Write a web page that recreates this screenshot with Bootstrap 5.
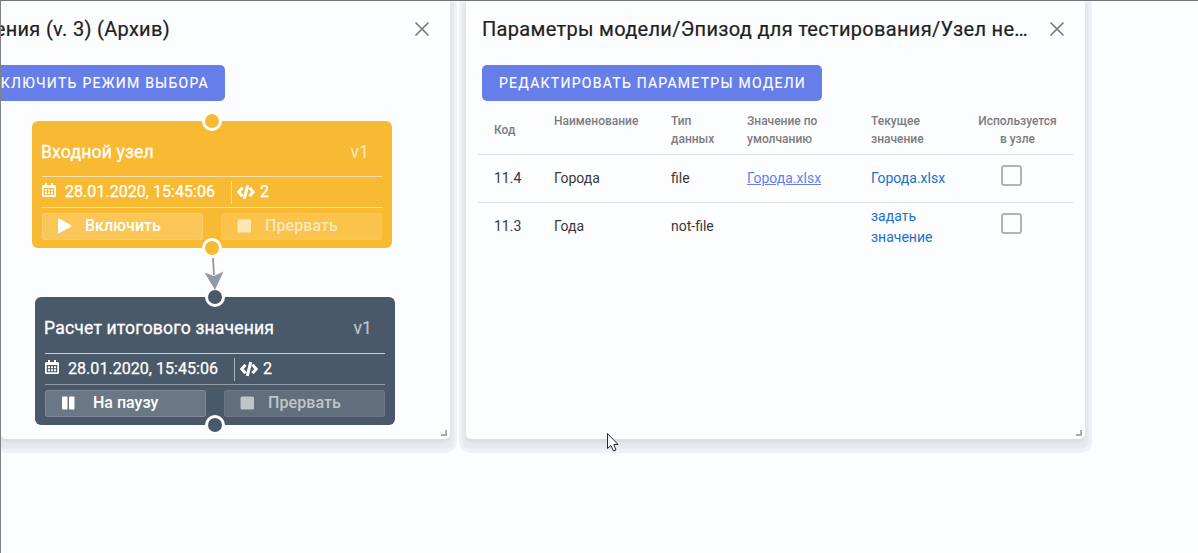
<!DOCTYPE html>
<html lang="ru">
<head>
<meta charset="utf-8">
<title>Параметры модели</title>
<link href="https://cdn.jsdelivr.net/npm/bootstrap@5.3.0/dist/css/bootstrap.min.css" rel="stylesheet">
<style>
html,body{height:100%}
body{font-family:Roboto,sans-serif;background:#fcfdff;color:#212121;border-top:1px solid #747377;border-left:1px solid #828187;overflow:hidden}
.pane{background:#fcfdff;height:438px;border-radius:0 0 5px 5px;box-shadow:0 3px 3px #d8dce4,0 6px 1px 4px #e7e9ee,0 7px 1px 7px #eef2f8}
.pane-left{width:449px}
.pane-right{width:619px}
.pane-head{height:64px;padding:0 20px 8px 16px}
.pane-title{font-size:20px;font-weight:400;line-height:28px;letter-spacing:.31px;white-space:nowrap;-webkit-text-stroke:.2px #212121}
.btn-mode{height:36px;background:#667eea;color:#fff;border:0;border-radius:5px;padding:0 16px 0 17px;font-size:14px;line-height:36px;letter-spacing:1.26px;white-space:nowrap;-webkit-text-stroke:.15px #fff}
.btn-mode:hover{background:#667eea;color:#fff}
.canvas{height:338px}
.node{position:absolute;width:360px;height:127px;border-radius:6px;padding:0 10px;color:#fff;font-size:16px;font-weight:500}
.node-input{left:31px;top:20px;background:#f8ba32;--fill:#f8ba32;--rule:rgba(255,255,255,.6);--rule2:rgba(255,255,255,.6)}
.node-calc{left:34px;top:196px;height:128px;padding-top:1px;background:#4a5969;--fill:#4a5969;--rule:rgba(255,255,255,.7);--rule2:rgba(255,255,255,.4)}
.node-name{height:56px;border-bottom:1px solid var(--rule);padding:7px 13px 0 0;font-size:17.6px;font-weight:400;-webkit-text-stroke:.3px #fff}
.node-calc .node-name{padding-top:5px}
.node-name span:first-child{margin-left:-1px;letter-spacing:.16px}
.node-name span:last-child{opacity:.65;-webkit-text-stroke:.1px #fff}
.node-meta{height:31px;border-bottom:1px solid var(--rule2);font-weight:400;font-size:16.1px;-webkit-text-stroke:.25px #fff}
.node-meta .date{width:151px;margin-left:9px;white-space:nowrap}
.node-meta i{width:1px;height:23px;background:rgba(255,255,255,.55);margin:0 4px 0 15px}
.node-meta svg:first-child{margin-bottom:2px}
.node-btn{width:161px;height:27px;background:rgba(255,255,255,.18);border:1px solid rgba(255,255,255,.14);border-radius:3px;padding-left:14px;margin-top:5px}
.node-btn svg{margin-bottom:1px}
.node-btn span{margin-bottom:1px}
.node-btn.off{background:rgba(255,255,255,.13);border-color:rgba(255,255,255,.07)}
.node-btn.off>*{opacity:.6}
.label-on{margin-left:12px}
.label-off{margin-left:13px;letter-spacing:.08px}
.label-pause{margin-left:17px}
.port{position:absolute;left:170px;width:20px;height:20px;border-radius:50%;border:3px solid #fff;background:var(--fill)}
.port.in{top:-10px}.port.out{bottom:-10px}
.link-arrow{position:absolute;left:196px;top:154px}
.grip{position:absolute;right:3px;bottom:3px;width:6px;height:6px;border:solid #adadb1;border-width:0 2px 2px 0}
.params{width:595px;margin:2px 0 0 12px;table-layout:fixed;font-size:14px;line-height:21px;color:#38383a;border-collapse:collapse}
.params th{font-size:12px;line-height:18px;font-weight:500;color:#7b7c7f;height:51px;padding:9px 16px 0;vertical-align:top}
.params th:first-child{padding:4px 16px 0}
.params td{height:48px;padding:0 16px;vertical-align:middle}
.params tr+tr td,.params tbody tr:first-child td{border-top:1px solid #e1e2e5}
.params a{color:#2170cc;text-decoration:none}
.params a.file{color:#667eea;text-decoration:underline}
.params td.two-line{padding-top:2px}
.tick{display:block;width:21px;height:21px;border:2px solid #b3b3b5;border-radius:3px;margin:-5px 0 0 23px}
.cursor{position:absolute;left:605px;top:431px}
</style>
</head>
<body>
<main class="d-flex gap-3 position-relative">
  <section class="pane pane-left position-relative flex-shrink-0">
    <header class="pane-head d-flex align-items-center justify-content-between ps-0">
      <div class="d-flex justify-content-end overflow-hidden" style="width:169px"><span class="pane-title">ения (v. 3) (Архив)</span></div>
      <svg width="16" height="16" viewBox="0 0 16 16" stroke="#77777b" stroke-width="1.6"><path d="M1.5 1.5l13 13M14.5 1.5l-13 13"/></svg>
    </header>
    <div class="d-flex justify-content-end overflow-hidden" style="width:224px"><button class="btn btn-mode">КЛЮЧИТЬ РЕЖИМ ВЫБОРА</button></div>
    <div class="canvas position-relative">
      <article class="node node-input">
        <div class="node-name d-flex align-items-center justify-content-between"><span>Входной узел</span><span>v1</span></div>
        <div class="node-meta d-flex align-items-center">
          <svg width="14" height="16" viewBox="0 0 14 16" fill="#fff"><use href="#cal"/></svg><span class="date">28.01.2020, 15:45:06</span><i></i>
          <svg width="20" height="16" viewBox="0 0 20 16"><use href="#code"/></svg><span class="ms-1">2</span>
        </div>
        <div class="d-flex justify-content-between">
          <div class="node-btn d-flex align-items-center"><svg width="16" height="16" fill="#fff"><path d="M1 1.500Q1 0 2.400.8L14 7.200Q15 8 14 8.800L2.400 15Q1 15.500 1 14z"/></svg><span class="label-on">Включить</span></div>
          <div class="node-btn off d-flex align-items-center"><svg width="16" height="16" fill="#fff"><rect x="1.500" y="1.500" width="13.500" height="13" rx="1.5"/></svg><span class="label-off">Прервать</span></div>
        </div>
        <span class="port in"></span><span class="port out"></span>
      </article>
      <article class="node node-calc">
        <div class="node-name d-flex align-items-center justify-content-between"><span>Расчет итогового значения</span><span>v1</span></div>
        <div class="node-meta d-flex align-items-center">
          <svg width="14" height="16" viewBox="0 0 14 16" fill="#fff"><use href="#cal"/></svg><span class="date">28.01.2020, 15:45:06</span><i></i>
          <svg width="20" height="16" viewBox="0 0 20 16"><use href="#code"/></svg><span class="ms-1">2</span>
        </div>
        <div class="d-flex justify-content-between">
          <div class="node-btn d-flex align-items-center"><svg width="16" height="16" fill="#fff"><rect x="2" y="1.500" width="5.500" height="13" rx="1"/><rect x="9" y="1.500" width="5.500" height="13" rx="1"/></svg><span class="label-pause">На паузу</span></div>
          <div class="node-btn off d-flex align-items-center"><svg width="16" height="16" fill="#fff"><rect x="1.500" y="1.500" width="13.500" height="13" rx="1.5"/></svg><span class="label-off">Прервать</span></div>
        </div>
        <span class="port in"></span><span class="port out"></span>
      </article>
      <svg class="link-arrow" width="36" height="36"><path d="M16 3L17 20" stroke="#9299a6" stroke-width="1.800"/><path d="M7.500 17.500L17 21L26.500 16.500L18 35z" fill="#9299a6"/></svg>
    </div>
    <span class="grip"></span>
  </section>

  <section class="pane pane-right position-relative flex-shrink-0">
    <header class="pane-head d-flex align-items-center justify-content-between">
      <span class="pane-title">Параметры модели/Эпизод для тестирования/Узел не…</span>
      <svg width="16" height="16" viewBox="0 0 16 16" stroke="#77777b" stroke-width="1.6"><path d="M1.5 1.5l13 13M14.5 1.5l-13 13"/></svg>
    </header>
    <button class="btn btn-mode ms-3 d-block">РЕДАКТИРОВАТЬ ПАРАМЕТРЫ МОДЕЛИ</button>
    <table class="params">
      <colgroup><col style="width:60px"><col style="width:117px"><col style="width:76px"><col style="width:124px"><col style="width:107px"><col style="width:111px"></colgroup>
      <thead><tr><th class="align-middle">Код</th><th>Наименование</th><th>Тип данных</th><th>Значение по умолчанию</th><th>Текущее значение</th><th class="text-center">Используется в&nbsp;узле</th></tr></thead>
      <tbody>
        <tr><td>11.4</td><td>Города</td><td>file</td><td><a class="file" href="#">Города.xlsx</a></td><td><a href="#">Города.xlsx</a></td><td><span class="tick"></span></td></tr>
        <tr><td>11.3</td><td>Года</td><td>not-file</td><td></td><td class="two-line"><a href="#">задать значение</a></td><td><span class="tick"></span></td></tr>
      </tbody>
    </table>
    <span class="grip"></span>
  </section>
  <svg class="cursor" width="14" height="21" viewBox="0 0 14 21"><path d="M1.500 1.500V16.500L5 13.500L7.500 19L10 18L7.800 12.500H12z" fill="#fff" stroke="#26262b" stroke-width="1"/></svg>
</main>
<svg width="0" height="0" class="position-absolute">
  <defs>
    <g id="cal"><path fill-rule="evenodd" d="M3 0h2v2h4V0h2v2h1.500Q14 2 14 3.500V12.500Q14 14 12.500 14H1.500Q0 14 0 12.500V3.500Q0 2 1.500 2H3zM1.800 5v7.300H12.200V5z"/><path d="M3 6.300h2v2H3zM6 6.300h2v2H6zM9 6.300h2v2H9zM3 9.300h2v2H3zM6 9.300h2v2H6zM9 9.300h2v2H9z"/></g>
    <g id="code" fill="none" stroke="#fff" stroke-width="3"><path d="M6.500 3.700L2.800 8L6.500 12.300M13.500 3.700L17.200 8L13.500 12.300M11.700 1.200L8.300 14.800"/></g>
  </defs>
</svg>
<script src="https://cdn.jsdelivr.net/npm/bootstrap@5.3.0/dist/js/bootstrap.bundle.min.js"></script>
</body>
</html>
